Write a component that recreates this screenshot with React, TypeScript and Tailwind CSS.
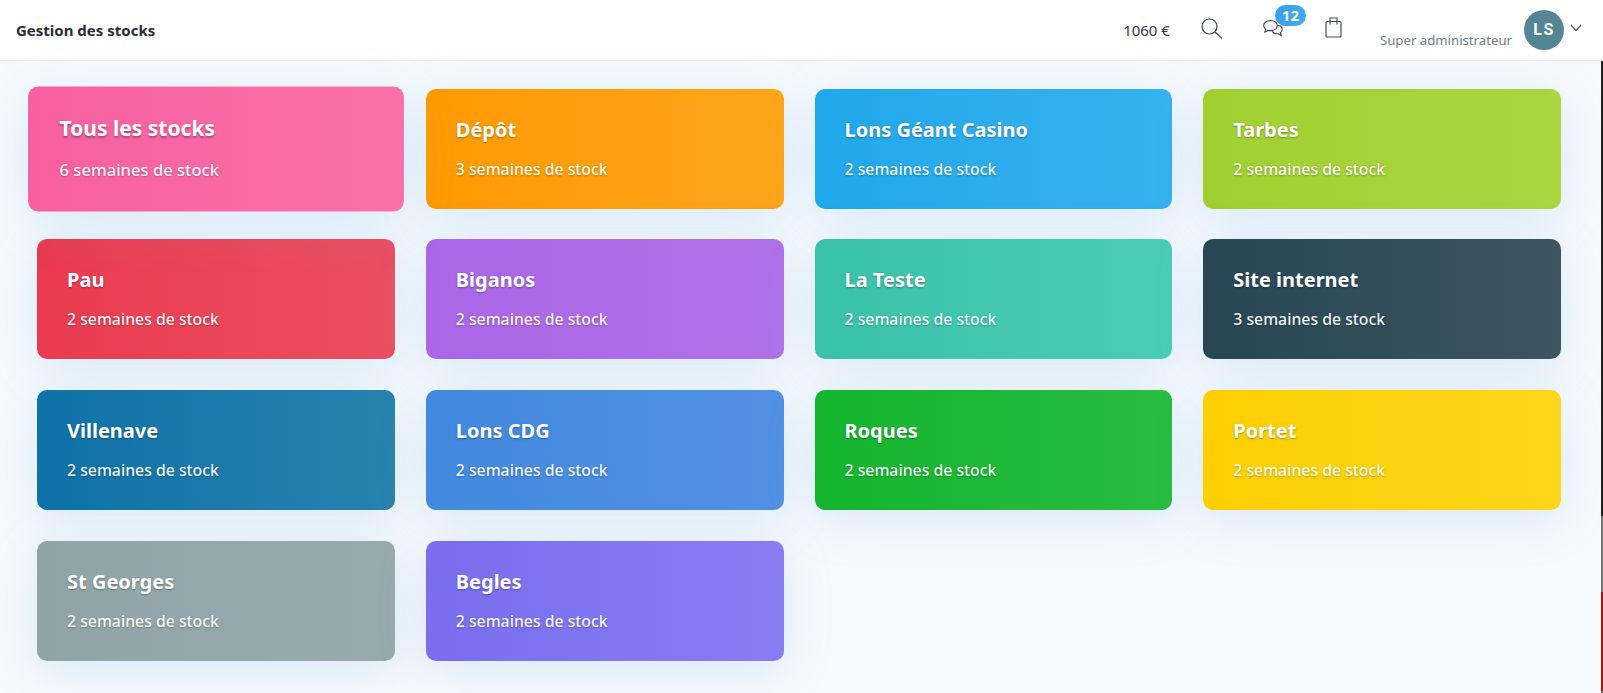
import React from "react";

function CardView({ name, weeks, cls, active }: { name: string; weeks: number; cls: string; active?: boolean }) {
  return (
    <div
      className={`h-[120px] rounded-[10px] pl-[30px] pt-[26px] text-white shadow-[0_10px_50px_rgba(90,155,215,0.18)] ${cls} ${active ? "scale-x-[1.05] scale-y-[1.042]" : ""}`}
    >
      <div className="text-[20px] font-bold leading-[30px] [text-shadow:0_1px_2px_rgba(0,0,0,0.3)]">{name}</div>
      <div className="mt-[12px] text-[15.800px] font-medium leading-[24px] text-white/95 [text-shadow:0_1px_2px_rgba(0,0,0,0.25)]">{weeks} semaines de stock</div>
    </div>
  );
}

const cards = [
  { name: "Tous les stocks", weeks: 6, cls: "bg-gradient-to-r from-[#f85f9f] to-[#f872a9]", active: true },
  { name: "Dépôt", weeks: 3, cls: "bg-gradient-to-r from-[#fd9a00] to-[#fda51a]" },
  { name: "Lons Géant Casino", weeks: 2, cls: "bg-gradient-to-r from-[#1fa8ea] to-[#37b1ef]" },
  { name: "Tarbes", weeks: 2, cls: "bg-gradient-to-r from-[#a0d030] to-[#abd541]" },
  { name: "Pau", weeks: 2, cls: "bg-gradient-to-r from-[#ea3a50] to-[#ec4f62]" },
  { name: "Biganos", weeks: 2, cls: "bg-gradient-to-r from-[#aa66e6] to-[#b072e8]" },
  { name: "La Teste", weeks: 2, cls: "bg-gradient-to-r from-[#39c2a8] to-[#4bccb7]" },
  { name: "Site internet", weeks: 3, cls: "bg-gradient-to-r from-[#274654] to-[#3d5662]" },
  { name: "Villenave", weeks: 2, cls: "bg-gradient-to-r from-[#0e71a7] to-[#2783af]" },
  { name: "Lons CDG", weeks: 2, cls: "bg-gradient-to-r from-[#4189e0] to-[#5290e3]" },
  { name: "Roques", weeks: 2, cls: "bg-gradient-to-r from-[#13b52e] to-[#28bc40]" },
  { name: "Portet", weeks: 2, cls: "bg-gradient-to-r from-[#fdcf00] to-[#fdd51a]" },
  { name: "St Georges", weeks: 2, cls: "bg-gradient-to-r from-[#90a4a8] to-[#98aaae]" },
  { name: "Begles", weeks: 2, cls: "bg-gradient-to-r from-[#786eee] to-[#887df2]" },
];

export default function App() {
  return (
    <div className="relative h-[693px] w-[1603px] overflow-hidden bg-[#f6fafd] font-['Noto_Sans',sans-serif]">
      <header className="flex h-[61px] items-center justify-between border-b border-[#e9edf2] bg-white pl-4 pr-[21px]">
        <div className="text-[15px] font-bold text-[#2a2d33]">Gestion des stocks</div>
        <div className="flex items-center">
          <span className="mr-[31px] text-[15px] text-[#33373d]">1060 €</span>
          <svg width="22" height="21" viewBox="0 0 22 21" fill="none" stroke="#3a3f45" strokeWidth="1.2" className="mb-[3px] mr-[40px]">
            <circle cx="8.500" cy="8.500" r="7.500" />
            <path d="M14 14 21 20.500" />
          </svg>
          <div className="relative mb-[2px] mr-[42px] h-5 w-5">
            <svg width="20" height="20" viewBox="0 0 20 20" fill="none" stroke="#3a3f45" strokeWidth="1.100">
              <path d="M7.500 1.500C3.500 1.500 .7 3.700.7 6.500c0 1.500.8 2.800 2 3.600L2 13l3.200-1.600c.7.100 1.500.2 2.300.2 4 0 6.800-2.200 6.800-5.100S11.500 1.500 7.500 1.500Z" />
              <path d="M15.200 6.300c2.400.6 4 2.200 4 4.200 0 1.300-.7 2.400-1.700 3.100l.7 2.900-3.200-1.800c-2.500.4-5-.6-6-2.600" />
            </svg>
            <span className="absolute left-[12px] top-[-14px] flex h-[21px] w-[31px] items-center justify-center rounded-full bg-gradient-to-r from-[#379fe8] to-[#40acec] text-[15px] font-bold text-white">12</span>
          </div>
          <svg width="17" height="21" viewBox="0 0 17 21" fill="none" stroke="#4a4e53" strokeWidth="1.200" className="mb-[4px] mr-[38px]">
            <rect x="1" y="4.500" width="15" height="15.500" rx="1" />
            <path d="M5 7.500V1h7v6.500" />
          </svg>
          <span className="mr-[12px] mt-[21px] text-[13.200px] text-[#767b82]">Super administrateur</span>
          <div className="flex h-10 w-10 items-center justify-center rounded-full bg-[#548594] font-['Roboto',sans-serif] text-[16px] font-bold tracking-[1.500px] text-white">LS</div>
          <svg width="12" height="8" viewBox="0 0 12 8" fill="none" stroke="#555" strokeWidth="1.200" className="mb-1 ml-[6px]">
            <path d="M1 1 6 6.500 11 1" />
          </svg>
        </div>
      </header>
      <main className="grid grid-cols-4 gap-x-[31px] gap-y-[30.700px] pl-[37px] pr-[42px] pt-[27.600px]">
        {cards.map((c) => (
          <CardView key={c.name} {...c} />
        ))}
      </main>
      <div className="absolute right-0 top-[61px] flex h-[632px] w-[2px] flex-col">
        <div className="h-[455px] bg-[#1f1f1f]" />
        <div className="h-[76px] bg-[#777777]" />
        <div className="h-[99px] bg-[#a81818]" />
        <div className="h-[2px] bg-[#777777]" />
      </div>
    </div>
  );
}
